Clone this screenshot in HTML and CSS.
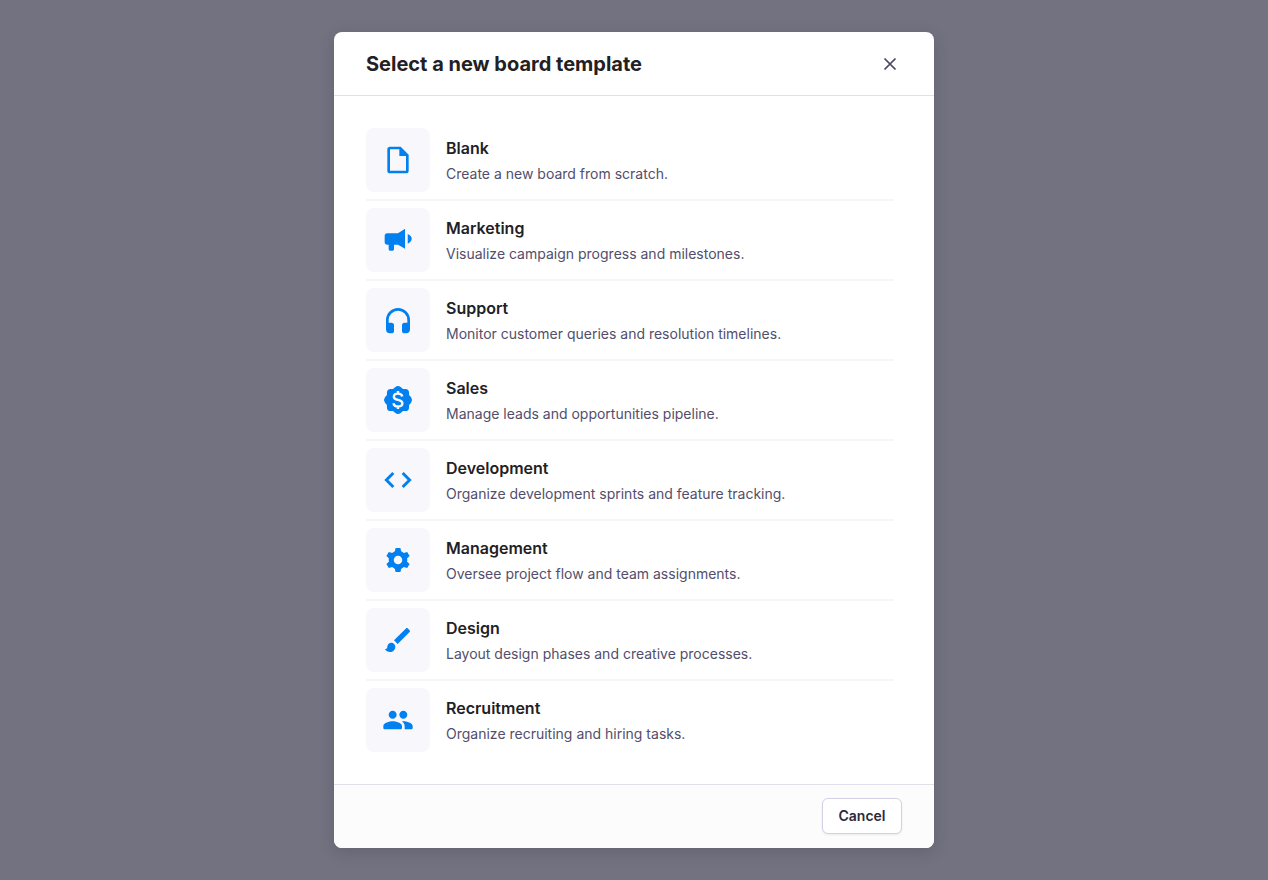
FILE: index.html
```html
<!DOCTYPE html>
<html lang="en">
<head>
  <meta charset="UTF-8" />
  <meta name="viewport" content="width=device-width, initial-scale=1.0" />
  <title>Select a new board template</title>
  <link rel="stylesheet" href="styles.css">
</head>
<body>
  <div class="overlay">
    <div class="modal" role="dialog" aria-modal="true" aria-labelledby="modalTitle">
      <header class="modal-header">
        <h1 class="modal-title" id="modalTitle">Select a new board template</h1>
        <button type="button" class="close-btn" aria-label="Close">
          <svg viewBox="0 0 24 24"><path d="M6.5 6.500l11 11M17.500 6.500l-11 11" /></svg>
        </button>
      </header>

      <ul class="template-list">
        <li>
          <button type="button" class="template">
            <span class="template-icon">
              <svg viewBox="0 0 24 24"><path d="M14 2H6a2 2 0 0 0-2 2v16a2 2 0 0 0 2 2h12a2 2 0 0 0 2-2V8zM6 20V4h7v5h5v11z" /></svg>
            </span>
            <span class="template-text">
              <span class="template-name">Blank</span>
              <span class="template-desc">Create a new board from scratch.</span>
            </span>
          </button>
        </li>
        <li>
          <button type="button" class="template">
            <span class="template-icon">
              <svg viewBox="0 0 24 24"><path d="M17.300 3.500v15L12 15.500H9V19a1 1 0 0 1-1 1H6a1 1 0 0 1-1-1v-3.500H4a2 2 0 0 1-2-2V9a2 2 0 0 1 2-2h8zM19.300 7.500c1.800.8 3 2 3 3.600s-1.200 2.900-3 3.700z" /></svg>
            </span>
            <span class="template-text">
              <span class="template-name">Marketing</span>
              <span class="template-desc">Visualize campaign progress and milestones.</span>
            </span>
          </button>
        </li>
        <li>
          <button type="button" class="template">
            <span class="template-icon">
              <svg viewBox="0 0 24 24"><path d="M12 3a9 9 0 0 0-9 9v7a3 3 0 0 0 3 3h1a2 2 0 0 0 2-2v-4a2 2 0 0 0-2-2H5v-2a7 7 0 0 1 14 0v2h-2a2 2 0 0 0-2 2v4a2 2 0 0 0 2 2h1a3 3 0 0 0 3-3v-7a9 9 0 0 0-9-9z" /></svg>
            </span>
            <span class="template-text">
              <span class="template-name">Support</span>
              <span class="template-desc">Monitor customer queries and resolution timelines.</span>
            </span>
          </button>
        </li>
        <li>
          <button type="button" class="template">
            <span class="template-icon">
              <svg viewBox="0 0 24 24">
                <path d="M10 2.200Q12 .8 14 2.200L15.700 3.700H17.400Q20.300 3.700 20.300 6.600V8.300L21.800 10Q23.200 12 21.800 14L20.300 15.700V17.400Q20.300 20.300 17.400 20.300H15.700L14 21.800Q12 23.200 10 21.800L8.300 20.300H6.600Q3.700 20.300 3.700 17.400V15.700L2.200 14Q.8 12 2.200 10L3.700 8.300V6.600Q3.700 3.700 6.600 3.700H8.300z" />
                <path class="cutout" d="M15.200 9.300C14.900 7.900 13.700 7.200 12 7.200c-1.900 0-3.100.9-3.100 2.300 0 3.300 6.400 1.600 6.400 5 0 1.500-1.300 2.400-3.200 2.400-1.900 0-3.200-.9-3.500-2.500M12 5.300v1.900M12 16.900v1.900" />
              </svg>
            </span>
            <span class="template-text">
              <span class="template-name">Sales</span>
              <span class="template-desc">Manage leads and opportunities pipeline.</span>
            </span>
          </button>
        </li>
        <li>
          <button type="button" class="template">
            <span class="template-icon">
              <svg viewBox="0 0 24 24"><path class="line" d="M8.500 6.800L3.300 12l5.200 5.200M15.500 6.800l5.200 5.200-5.200 5.200" /></svg>
            </span>
            <span class="template-text">
              <span class="template-name">Development</span>
              <span class="template-desc">Organize development sprints and feature tracking.</span>
            </span>
          </button>
        </li>
        <li>
          <button type="button" class="template">
            <span class="template-icon">
              <svg viewBox="0 0 24 24">
                <circle cx="12" cy="12" r="7" />
                <path d="M10.200 3h3.600l.9 4v10l-.9 4h-3.600l-.9-4V7z" />
                <path d="M10.200 3h3.600l.9 4v10l-.9 4h-3.600l-.9-4V7z" transform="rotate(60 12 12)" />
                <path d="M10.200 3h3.600l.9 4v10l-.9 4h-3.600l-.9-4V7z" transform="rotate(120 12 12)" />
                <circle class="hole" cx="12" cy="12" r="3.200" />
              </svg>
            </span>
            <span class="template-text">
              <span class="template-name">Management</span>
              <span class="template-desc">Oversee project flow and team assignments.</span>
            </span>
          </button>
        </li>
        <li>
          <button type="button" class="template">
            <span class="template-icon">
              <svg viewBox="0 0 24 24"><path d="M7 14c-1.660 0-3 1.340-3 3 0 1.310-1.160 2-2 2 .92 1.220 2.490 2 4 2 2.210 0 4-1.790 4-4 0-1.660-1.340-3-3-3zM20.710 4.630l-1.340-1.340c-.39-.39-1.020-.39-1.410 0L9 12.250 11.750 15l8.960-8.960c.39-.39.39-1.020 0-1.410z" /></svg>
            </span>
            <span class="template-text">
              <span class="template-name">Design</span>
              <span class="template-desc">Layout design phases and creative processes.</span>
            </span>
          </button>
        </li>
        <li>
          <button type="button" class="template">
            <span class="template-icon">
              <svg viewBox="0 0 24 24"><path d="M16 11c1.660 0 2.990-1.340 2.990-3S17.660 5 16 5s-3 1.340-3 3 1.340 3 3 3zM8 11c1.660 0 2.990-1.340 2.990-3S9.660 5 8 5 5 6.340 5 8s1.340 3 3 3zM8 13c-2.330 0-7 1.170-7 3.500V18a1 1 0 0 0 1 1h12a1 1 0 0 0 1-1v-1.500C15 14.170 10.330 13 8 13zM16 13c-.29 0-.62.02-.97.05 1.160.84 1.970 1.970 1.970 3.450V19h5a1 1 0 0 0 1-1v-1.500c0-2.330-4.670-3.500-7-3.500z" /></svg>
            </span>
            <span class="template-text">
              <span class="template-name">Recruitment</span>
              <span class="template-desc">Organize recruiting and hiring tasks.</span>
            </span>
          </button>
        </li>
      </ul>

      <footer class="modal-footer">
        <button type="button" class="cancel-btn">Cancel</button>
      </footer>
    </div>
  </div>
</body>
</html>
```
FILE: styles.css
```css
* {
  box-sizing: border-box;
}

body {
  margin: 0;
  font-family: Inter, "Liberation Sans", sans-serif;
  color: #1f2124;
}

button {
  font-family: inherit;
  cursor: pointer;
}

.overlay {
  min-height: 100vh;
  padding: 32px;
  display: flex;
  align-items: center;
  justify-content: center;
  background: #737280;
}

.modal {
  width: 100%;
  max-width: 600px;
  background: white;
  border-radius: 8px;
  box-shadow: 0 4px 16px rgba(40, 38, 60, 0.2);
  overflow: hidden;
}

.modal-header {
  display: flex;
  align-items: center;
  justify-content: space-between;
  padding: 16px 32px 15px;
  border-bottom: 1px solid #e1e0ea;
}

.modal-title {
  margin: 0;
  font-size: 20px;
  line-height: 32px;
  font-weight: 700;
}

.close-btn {
  display: flex;
  padding: 0;
  border: none;
  background: none;
}

.close-btn svg {
  width: 24px;
  height: 24px;
  fill: none;
  stroke: #484564;
  stroke-width: 1.7;
}

.template-list {
  list-style: none;
  margin: 0;
  padding: 32px 40px 32px 32px;
}

.template-list li + li {
  margin-top: 7px;
  padding-top: 7px;
  border-top: 2px solid #f6f6f8;
}

.template {
  display: flex;
  align-items: center;
  gap: 16px;
  width: 100%;
  padding: 0;
  border: none;
  background: none;
  color: inherit;
  text-align: left;
}

.template-icon {
  display: flex;
  padding: 16px;
  border-radius: 8px;
  background: #f8f7fc;
}

.template-icon svg {
  width: 32px;
  height: 32px;
  fill: #0280f0;
}

.template-icon .cutout {
  fill: none;
  stroke: #f8f7fc;
  stroke-width: 1.8;
}

.template-icon .hole {
  fill: #f8f7fc;
}

.template-icon .line {
  fill: none;
  stroke: #0280f0;
  stroke-width: 2.2;
}

.template-text {
  display: flex;
  flex-direction: column;
  gap: 4px;
}

.template-name {
  font-size: 16px;
  line-height: 24px;
  font-weight: 600;
}

.template-desc {
  font-size: 14px;
  line-height: 20px;
  color: #524e6b;
}

.modal-footer {
  display: flex;
  justify-content: flex-end;
  padding: 13px 32px 14px;
  background: #fcfcfd;
  border-top: 1px solid #e1e0ea;
}

.cancel-btn {
  min-width: 80px;
  padding: 7px 15px;
  border: 1px solid #d3cfe6;
  border-radius: 6px;
  background: white;
  box-shadow: 0 1px 2px rgba(40, 38, 60, 0.08);
  color: #2c2a3a;
  font-size: 14px;
  line-height: 20px;
  font-weight: 600;
}
```
